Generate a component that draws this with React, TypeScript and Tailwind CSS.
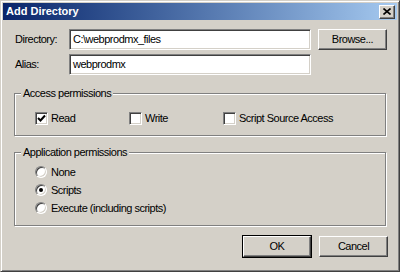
import React from "react";

const FONT = "font-['Liberation_Sans',Arial,sans-serif]";

const raised =
  "border border-t-white border-l-white border-r-[#404040] border-b-[#404040] shadow-[inset_-1px_-1px_0_#808080,inset_1px_1px_0_#d4d0c8] bg-[#d4d0c8]";
const sunken =
  "border border-t-[#808080] border-l-[#808080] border-r-white border-b-white shadow-[inset_1px_1px_0_#404040,inset_-1px_-1px_0_#d4d0c8] bg-white";

const TextBox = ({ value }: { value: string }) => (
  <div className={`${sunken} w-[242px] h-[21px] flex items-center pl-[3px] text-black`}>
    {value}
  </div>
);

const Button = ({
  label,
  isDefault,
  className = "",
}: {
  label: string;
  isDefault?: boolean;
  className?: string;
}) => (
  <div
    className={`${className} ${
      isDefault ? "outline outline-1 outline-black" : ""
    } ${raised} h-[21px] flex items-center justify-center text-black`}
  >
    {label}
  </div>
);

const Checkbox = ({ label, checked }: { label: string; checked?: boolean }) => (
  <div className="flex items-center gap-[3px] w-[94px] whitespace-nowrap">
    <div className={`${sunken} w-[13px] h-[13px] shrink-0 flex items-center justify-center`}>
      {checked && (
        <svg width="9" height="9" viewBox="0 0 9 9">
          <path d="M1 4 L3.5 6.5 L8 1.5" stroke="#000" strokeWidth="2" fill="none" />
        </svg>
      )}
    </div>
    <span>{label}</span>
  </div>
);

const Radio = ({ label, checked }: { label: string; checked?: boolean }) => (
  <div className="flex items-center gap-[4px] h-[18px]">
    <div className="w-[12px] h-[12px] rounded-full border border-t-[#808080] border-l-[#808080] border-r-white border-b-white bg-white shadow-[inset_1px_1px_0_#404040,inset_-1px_-1px_0_#d4d0c8] flex items-center justify-center">
      {checked && <div className="w-[4px] h-[4px] rounded-full bg-black" />}
    </div>
    <span>{label}</span>
  </div>
);

const GroupBox = ({
  title,
  className,
  children,
}: {
  title: string;
  className: string;
  children: React.ReactNode;
}) => (
  <div
    className={`relative ml-[-1px] w-[372px] border border-[#808080] shadow-[1px_1px_0_white,inset_1px_1px_0_white] ${className}`}
  >
    <span className="absolute left-[6px] top-[-8px] px-[2px] bg-[#d4d0c8] leading-[14px]">
      {title}
    </span>
    {children}
  </div>
);

export default function App() {
  return (
    <div
      className={`${FONT} text-[11px] tracking-[-0.5px] text-black w-[400px] h-[272px] bg-[#d4d0c8] border border-t-[#d4d0c8] border-l-[#d4d0c8] border-r-[#404040] border-b-[#404040] shadow-[inset_1px_1px_0_white,inset_-1px_-1px_0_#808080] p-[2px] flex flex-col`}
    >
      {/* Title bar */}
      <div className="h-[17px] flex items-center justify-between pl-[3px] pr-[2px] bg-gradient-to-r from-[#0a246a] to-[#a6caf0]">
        <span className="text-white font-bold text-[11px] tracking-normal">Add Directory</span>
        <div className={`${raised} w-[16px] h-[14px] flex items-center justify-center`}>
          <svg width="8" height="7" viewBox="0 0 8 7">
            <path d="M0.5 0.5 L7.5 6.5 M7.5 0.5 L0.5 6.5" stroke="#000" strokeWidth="1.6" />
          </svg>
        </div>
      </div>

      <div className="flex flex-col pl-[12px] pt-[8px]">
        <div className="flex items-center h-[22px]">
          <span className="w-[54px]">Directory:</span>
          <TextBox value="C:\webprodmx_files" />
          <Button label="Browse..." className="ml-[7px] w-[69px]" />
        </div>
        <div className="flex items-center h-[22px] mt-[3px]">
          <span className="w-[54px]">Alias:</span>
          <TextBox value="webprodmx" />
        </div>

        <GroupBox title="Access permissions" className="mt-[18px] h-[43px]">
          <div className="flex items-center pl-[20px] pt-[16px]">
            <Checkbox label="Read" checked />
            <Checkbox label="Write" />
            <Checkbox label="Script Source Access" />
          </div>
        </GroupBox>

        <GroupBox title="Application permissions" className="mt-[16px] h-[74px]">
          <div className="flex flex-col pl-[20px] pt-[10px]">
            <Radio label="None" />
            <Radio label="Scripts" checked />
            <Radio label="Execute (including scripts)" />
          </div>
        </GroupBox>

        <div className="flex justify-end gap-[8px] mt-[10px] pr-[9px]">
          <Button label="OK" isDefault className="w-[68px]" />
          <Button label="Cancel" className="w-[69px]" />
        </div>
      </div>
    </div>
  );
}
